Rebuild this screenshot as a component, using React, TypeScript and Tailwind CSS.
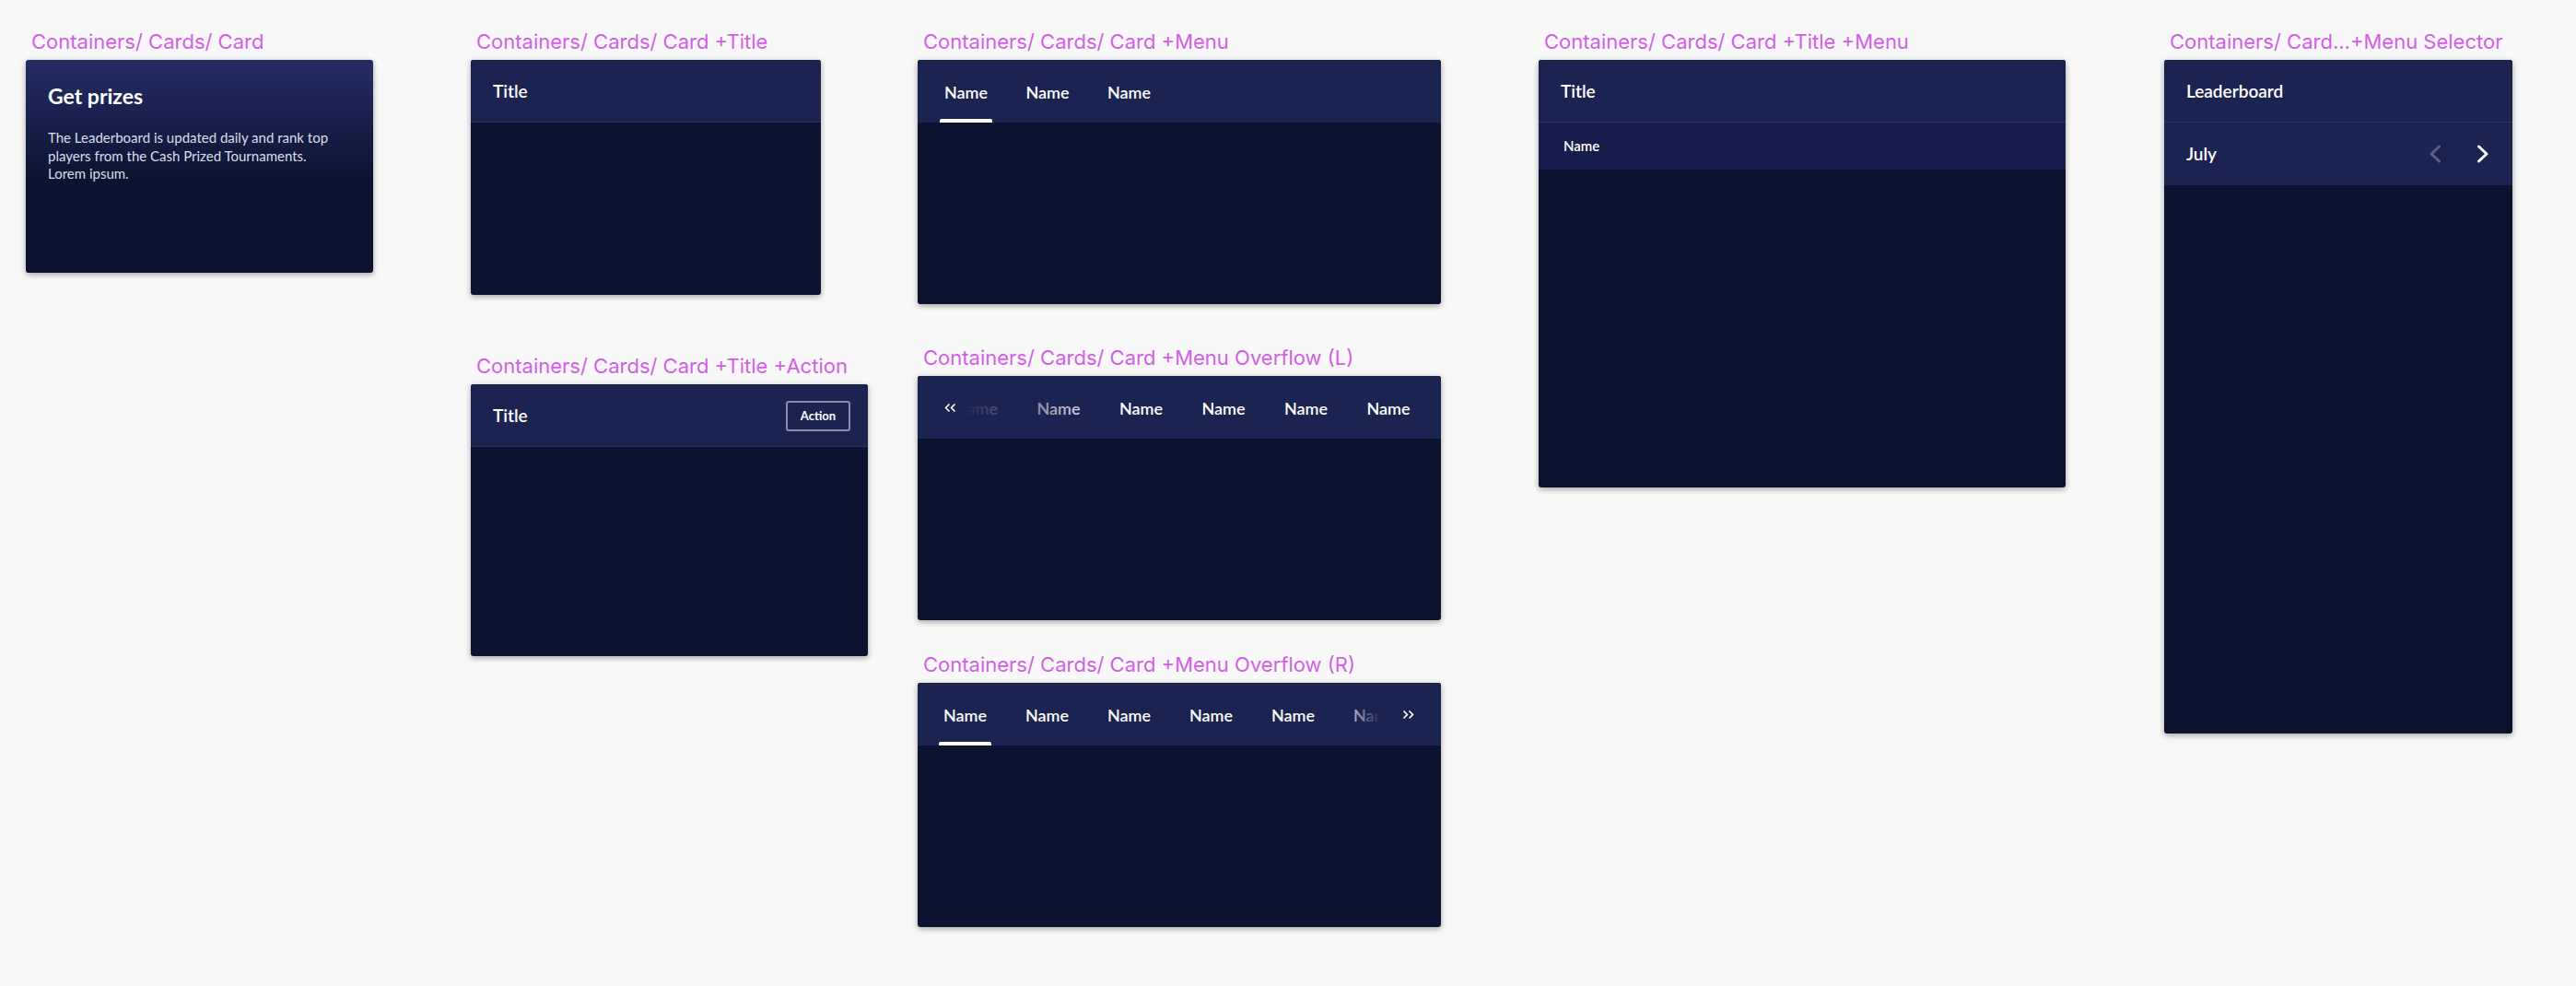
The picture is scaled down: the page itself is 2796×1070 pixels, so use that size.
import type { ReactNode } from "react";

const cardFont = "font-[Lato,'Noto_Sans',sans-serif]";

function Label({ children }: { children: ReactNode }) {
  return (
    <div className="pl-[6px] h-[26px] leading-[26px] text-[22px] text-[#d35fe6] font-[Inter,sans-serif] whitespace-nowrap">
      {children}
    </div>
  );
}

function Card({ className, children }: { className: string; children?: ReactNode }) {
  return (
    <div
      className={`${className} ${cardFont} flex flex-col rounded-[3px] overflow-hidden bg-[#0b1331] shadow-[0_2px_6px_rgba(0,0,0,0.35)]`}
    >
      {children}
    </div>
  );
}

function TitleBar({ title, children }: { title: string; children?: ReactNode }) {
  return (
    <div className="h-[68px] shrink-0 flex items-center justify-between pl-[24px] pr-[19px] pt-[2px] bg-[#1b2350] border-b border-[#2c3463]">
      <span className="text-[19px] font-semibold text-white">{title}</span>
      {children}
    </div>
  );
}

function Tab({ active }: { active?: boolean }) {
  return (
    <div className="relative w-[57px] h-full shrink-0 flex items-center justify-center pt-[2px]">
      <span className="text-[18px] font-semibold text-white whitespace-nowrap">Name</span>
      {active && <div className="absolute left-0 right-0 bottom-0 h-[4px] rounded-t-[2px] bg-white" />}
    </div>
  );
}

function DoubleChevron({ dir }: { dir: "left" | "right" }) {
  const pts =
    dir === "left"
      ? ["5,1 1.5,4.5 5,8", "11,1 7.5,4.5 11,8"]
      : ["1,1 4.5,4.5 1,8", "7,1 10.5,4.5 7,8"];
  return (
    <svg width="12" height="9" viewBox="0 0 12 9" fill="none">
      {pts.map((p) => (
        <polyline key={p} points={p} stroke="white" strokeWidth="1.7" strokeLinecap="round" strokeLinejoin="round" />
      ))}
    </svg>
  );
}

function Chevron({ dir, color }: { dir: "left" | "right"; color: string }) {
  return (
    <svg width="14" height="20" viewBox="0 0 14 20" fill="none">
      <polyline
        points={dir === "left" ? "11.5,2 3,10 11.5,18" : "2.5,2 11,10 2.5,18"}
        stroke={color}
        strokeWidth="3"
        strokeLinecap="round"
        strokeLinejoin="round"
      />
    </svg>
  );
}

export default function App() {
  return (
    <div className="w-[2796px] h-[1070px] bg-[#f8f8f8] flex items-start pl-[28px] pt-[32px] overflow-hidden">
      {/* col 1 */}
      <div className="flex flex-col gap-[7px] w-[377px] shrink-0">
        <Label>Containers/ Cards/ Card</Label>
        <Card className="w-[377px] h-[231px] bg-linear-to-b from-[#262d66] to-[#0b1331] to-58%">
          <div className="pt-[24px] px-[24px]">
            <h2 className="text-[23px] leading-[30px] font-bold text-white">Get prizes</h2>
            <p className="mt-[21px] text-[15px] leading-[19.5px] text-[#dcdeea] whitespace-nowrap">
              The Leaderboard is updated daily and rank top
              <br />
              players from the Cash Prized Tournaments.
              <br />
              Lorem ipsum.
            </p>
          </div>
        </Card>
      </div>

      {/* col 2 */}
      <div className="ml-[106px] flex flex-col w-[431px] shrink-0">
        <div className="flex flex-col gap-[7px]">
          <Label>Containers/ Cards/ Card +Title</Label>
          <Card className="w-[380px] h-[255px]">
            <TitleBar title="Title" />
          </Card>
        </div>
        <div className="mt-[64px] flex flex-col gap-[7px]">
          <Label>Containers/ Cards/ Card +Title +Action</Label>
          <Card className="w-[431px] h-[295px]">
            <TitleBar title="Title">
              <button className="w-[70px] h-[33px] rounded-[3px] border-2 border-[#8a8ea8] text-[13px] font-bold text-white">
                Action
              </button>
            </TitleBar>
          </Card>
        </div>
      </div>

      {/* col 3 */}
      <div className="ml-[54px] flex flex-col w-[568px] shrink-0">
        <div className="flex flex-col gap-[7px]">
          <Label>Containers/ Cards/ Card +Menu</Label>
          <Card className="w-[568px] h-[265px]">
            <div className="h-[68px] shrink-0 flex pl-[24px] gap-[31.5px] bg-[#1b2350]">
              <Tab active />
              <Tab />
              <Tab />
            </div>
          </Card>
        </div>
        <div className="mt-[45px] flex flex-col gap-[7px]">
          <Label>Containers/ Cards/ Card +Menu Overflow (L)</Label>
          <Card className="w-[568px] h-[265px]">
            <div className="relative h-[68px] shrink-0 flex pl-[35px] gap-[32.5px] bg-[#1b2350] overflow-hidden">
              {[0, 1, 2, 3, 4, 5].map((i) => (
                <Tab key={i} />
              ))}
              <div className="absolute inset-y-0 left-0 w-[210px] bg-linear-to-r from-[#1b2350] from-25% to-[#1b235000] to-100% flex items-center pl-[29px]">
                <DoubleChevron dir="left" />
              </div>
            </div>
          </Card>
        </div>
        <div className="mt-[35px] flex flex-col gap-[7px]">
          <Label>Containers/ Cards/ Card +Menu Overflow (R)</Label>
          <Card className="w-[568px] h-[265px]">
            <div className="relative h-[68px] shrink-0 flex pl-[23px] gap-[32px] bg-[#1b2350] overflow-hidden">
              <Tab active />
              {[1, 2, 3, 4, 5].map((i) => (
                <Tab key={i} />
              ))}
              <div className="absolute inset-y-0 right-0 w-[110px] bg-linear-to-l from-[#1b2350] from-60% to-[#1b235000] to-100% flex items-center justify-end pr-[29px]">
                <DoubleChevron dir="right" />
              </div>
            </div>
          </Card>
        </div>
      </div>

      {/* col 4 */}
      <div className="ml-[106px] flex flex-col gap-[7px] w-[572px] shrink-0">
        <Label>Containers/ Cards/ Card +Title +Menu</Label>
        <Card className="w-[572px] h-[464px]">
          <TitleBar title="Title" />
          <div className="h-[51px] shrink-0 flex items-center pl-[27px] bg-[#161d4b]">
            <span className="text-[15px] font-semibold text-white">Name</span>
          </div>
        </Card>
      </div>

      {/* col 5 */}
      <div className="ml-[107px] flex flex-col gap-[7px] w-[378px] shrink-0">
        <Label>Containers/ Card...+Menu Selector</Label>
        <Card className="w-[378px] h-[731px]">
          <TitleBar title="Leaderboard" />
          <div className="h-[68px] shrink-0 flex items-center justify-between pl-[24px] pr-[25px] bg-[#1b2350]">
            <span className="text-[19px] font-semibold text-white">July</span>
            <div className="flex items-center gap-[38px]">
              <Chevron dir="left" color="#5b6288" />
              <Chevron dir="right" color="#ffffff" />
            </div>
          </div>
        </Card>
      </div>
    </div>
  );
}
